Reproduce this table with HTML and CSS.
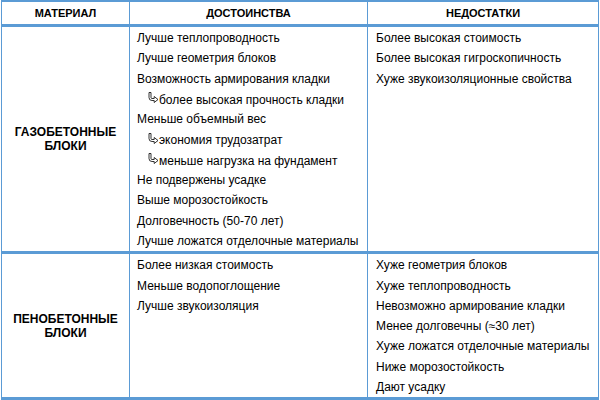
FILE: index.html
```html
<!DOCTYPE html>
<html lang="ru">
<head>
<meta charset="utf-8">
<title>Газобетон и пенобетон</title>
<link rel="stylesheet" href="styles.css">
</head>
<body>
<div class="wrap">
<table class="cmp">
  <colgroup>
    <col class="c1">
    <col class="c2">
    <col class="c3">
  </colgroup>
  <thead>
    <tr>
      <th>МАТЕРИАЛ</th>
      <th>ДОСТОИНСТВА</th>
      <th>НЕДОСТАТКИ</th>
    </tr>
  </thead>
  <tbody>
    <tr>
      <td class="mat">ГАЗОБЕТОННЫЕ<br>БЛОКИ</td>
      <td class="list">
        <div class="it">Лучше теплопроводность</div>
        <div class="it">Лучше геометрия блоков</div>
        <div class="it">Возможность армирования кладки</div>
        <div class="it sub"><svg class="arr" viewBox="0 0 11 11" width="11" height="11"><path d="M1 0.5V5.5Q1 8.5 4 8.5H6.2V10.5L10 7.5L6.2 4.5V6.5H4Q3 6.5 3 5.5V0.5Z"/></svg>более высокая прочность кладки</div>
        <div class="it">Меньше объемный вес</div>
        <div class="it sub"><svg class="arr" viewBox="0 0 11 11" width="11" height="11"><path d="M1 0.5V5.5Q1 8.5 4 8.5H6.2V10.5L10 7.5L6.2 4.5V6.5H4Q3 6.5 3 5.5V0.5Z"/></svg>экономия трудозатрат</div>
        <div class="it sub"><svg class="arr" viewBox="0 0 11 11" width="11" height="11"><path d="M1 0.5V5.5Q1 8.5 4 8.5H6.2V10.5L10 7.5L6.2 4.5V6.5H4Q3 6.5 3 5.5V0.5Z"/></svg>меньше нагрузка на фундамент</div>
        <div class="it">Не подвержены усадке</div>
        <div class="it">Выше морозостойкость</div>
        <div class="it">Долговечность (50-70 лет)</div>
        <div class="it">Лучше ложатся отделочные материалы</div>
      </td>
      <td class="list">
        <div class="it">Более высокая стоимость</div>
        <div class="it">Более высокая гигроскопичность</div>
        <div class="it">Хуже звукоизоляционные свойства</div>
      </td>
    </tr>
    <tr>
      <td class="mat">ПЕНОБЕТОННЫЕ<br>БЛОКИ</td>
      <td class="list">
        <div class="it">Более низкая стоимость</div>
        <div class="it">Меньше водопоглощение</div>
        <div class="it">Лучше звукоизоляция</div>
      </td>
      <td class="list">
        <div class="it">Хуже геометрия блоков</div>
        <div class="it">Хуже теплопроводность</div>
        <div class="it">Невозможно армирование кладки</div>
        <div class="it">Менее долговечны (≈30 лет)</div>
        <div class="it">Хуже ложатся отделочные материалы</div>
        <div class="it">Ниже морозостойкость</div>
        <div class="it">Дают усадку</div>
      </td>
    </tr>
  </tbody>
</table>
</div>
</body>
</html>
```
FILE: styles.css
```css
html, body {
  margin: 0;
  padding: 0;
  background: #ffffff;
}
body {
  font-family: "Liberation Sans", Arial, sans-serif;
  color: #000000;
}
.wrap {
  padding-left: 1px;
}
.cmp {
  width: 598px;
  table-layout: fixed;
  border-collapse: separate;
  border-spacing: 0;
  border-left: 1px solid #5b9bd5;
  border-right: 1px solid #5b9bd5;
  border-top: 2px solid #5b9bd5;
}
.c1 { width: 128px; }
.c2 { width: 238px; }
.c3 { width: 230px; }
.cmp th,
.cmp td {
  padding: 0;
  border-bottom: 3px solid #5b9bd5;
  border-right: 1px solid #5b9bd5;
}
.cmp th:last-child,
.cmp td:last-child {
  border-right: none;
}
.cmp th {
  height: 22px;
  font-size: 11px;
  font-weight: bold;
  text-align: center;
  vertical-align: middle;
  line-height: 13px;
}
.mat {
  font-size: 12px;
  font-weight: bold;
  text-align: center;
  vertical-align: middle;
  line-height: 14px;
}
.cmp td.list {
  vertical-align: top;
  font-size: 12px;
  line-height: 20.3px;
  padding-top: 1px;
  padding-left: 7px;
}
.cmp td.list:last-child {
  padding-left: 8px;
}
.it {
  white-space: nowrap;
}
.sub {
  padding-left: 11px;
  padding-top: 2px;
  line-height: 18.3px;
  display: flex;
  align-items: center;
}
.arr {
  flex: none;
  width: 11px;
  height: 11px;
  margin-top: -5px;
  fill: none;
  stroke: #000000;
  stroke-width: 0.8;
}
```
